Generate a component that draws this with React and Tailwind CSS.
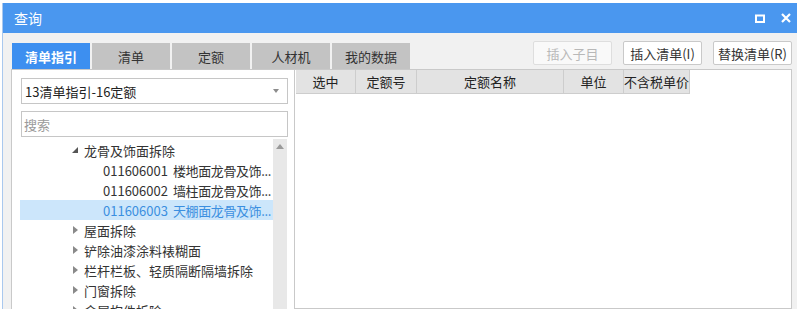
import React from 'react'

const TABS = ['清单指引', '清单', '定额', '人材机', '我的数据']

const COLUMNS = [
  { label: '选中', w: 'w-[60px]' },
  { label: '定额号', w: 'w-[61px]' },
  { label: '定额名称', w: 'w-[147px]' },
  { label: '单位', w: 'w-[60px]' },
  { label: '不含税单价', w: 'w-[66px]' },
]

const TREE = [
  { type: 'open', text: '龙骨及饰面拆除' },
  { type: 'leaf', code: '011606001', text: '楼地面龙骨及饰...' },
  { type: 'leaf', code: '011606002', text: '墙柱面龙骨及饰...' },
  { type: 'leaf', code: '011606003', text: '天棚面龙骨及饰...', selected: true },
  { type: 'closed', text: '屋面拆除' },
  { type: 'closed', text: '铲除油漆涂料裱糊面' },
  { type: 'closed', text: '栏杆栏板、轻质隔断隔墙拆除' },
  { type: 'closed', text: '门窗拆除' },
  { type: 'closed', text: '金属构件拆除' },
]

function TreeRow({ row }) {
  if (row.type === 'leaf') {
    return (
      <div className={`h-5 shrink-0 flex items-center whitespace-nowrap pl-[83px] ${row.selected ? 'bg-[#cce6fb] text-[#3b8fe0]' : 'text-[#333]'}`}>
        <span className="w-[70px] shrink-0">{row.code}</span>
        <span className="tracking-[-0.4px]">{row.text}</span>
      </div>
    )
  }
  return (
    <div className="h-5 shrink-0 flex items-center whitespace-nowrap text-[#333]">
      <span className="w-[64px] shrink-0 flex justify-end pr-[6px]">
        {row.type === 'open' ? (
          <svg width="6" height="6" viewBox="0 0 6 6"><path d="M6 0 L6 6 L0 6 Z" fill="#555" /></svg>
        ) : (
          <svg width="5" height="8" viewBox="0 0 5 8"><path d="M0 0 L5 4 L0 8 Z" fill="#8a8a8a" /></svg>
        )}
      </span>
      <span>{row.text}</span>
    </div>
  )
}

export default function App() {
  return (
    <div className="w-[800px] h-[309px] overflow-hidden bg-white pt-[3px] pl-[2px] font-['Noto_Sans_CJK_SC','Noto_Sans',sans-serif] text-[13px] leading-none">
      <div className="w-[795px] h-[306px] flex flex-col border-l border-[#a9c8ee]">
        {/* title bar */}
        <div className="h-[30px] shrink-0 bg-[#4a97ef] flex items-center pl-[11px] pr-[6px] text-white">
          <span className="text-[14px]">查询</span>
          <div className="ml-auto flex items-center gap-[16px]">
            <svg width="10" height="9" viewBox="0 0 10 9"><rect x="1" y="1.5" width="8" height="6.5" fill="none" stroke="#fff" strokeWidth="2" /></svg>
            <svg width="10" height="10" viewBox="0 0 10 10"><path d="M1 1 L9 9 M9 1 L1 9" stroke="#fff" strokeWidth="2.2" /></svg>
          </div>
        </div>

        {/* body */}
        <div className="flex-1 bg-[#f1f1f1] pl-[8px] pr-[5px] flex flex-col min-h-0">
          <div className="flex items-end h-[36px] shrink-0">
            <div className="flex gap-[2px] pl-[1px]">
              {TABS.map((t, i) => (
                <div
                  key={t}
                  className={`w-[78px] h-[26px] flex items-center justify-center ${i === 0 ? 'bg-[#3d8ff0] text-white font-bold' : 'bg-[#c3c3c3] text-[#333]'}`}
                >
                  {t}
                </div>
              ))}
            </div>
            <div className="ml-auto flex gap-[11px] mb-[4px]">
              <div className="w-[79px] h-[24px] flex items-center justify-center border border-[#dedede] bg-[#f9f9f9] text-[#b8b8b8] rounded-[2px]">插入子目</div>
              <div className="w-[79px] h-[24px] flex items-center justify-center border border-[#c9c9c9] bg-white text-[#333] rounded-[2px]">插入清单(I)</div>
              <div className="w-[79px] h-[24px] flex items-center justify-center border border-[#c9c9c9] bg-white text-[#333] rounded-[2px]">替换清单(R)</div>
            </div>
          </div>

          <div className="flex flex-1 min-h-0">
            {/* left panel */}
            <div className="w-[283px] min-h-0 overflow-hidden bg-white border-l border-t border-[#c9c9c9] pl-[9px] pt-[8px] flex flex-col">
              <div className="shrink-0 w-[267px] h-[26px] border border-[#c6c6c6] flex items-center pl-[3px] pr-[8px] text-[#222]">
                <span>13清单指引-16定额</span>
                <svg className="ml-auto" width="6" height="4" viewBox="0 0 6 4"><path d="M0 0 L6 0 L3 4 Z" fill="#8c8c8c" /></svg>
              </div>
              <div className="shrink-0 w-[267px] h-[26px] border border-[#c6c6c6] flex items-center pl-[2px] mt-[7px] text-[#9a9a9a]">
                搜索
              </div>
              <div className="flex mt-[2px] flex-1 min-h-0">
                <div className="w-[253px] -ml-[1px] pt-[1px] flex flex-col">
                  {TREE.map((r, i) => <TreeRow key={i} row={r} />)}
                </div>
                <div className="w-[14px] bg-[#e8e8e8] flex justify-center pt-[5px]">
                  <svg width="8" height="5" viewBox="0 0 8 5"><path d="M0 5 L4 0 L8 5 Z" fill="#9a9a9a" /></svg>
                </div>
              </div>
            </div>

            {/* right panel */}
            <div className="flex-1 bg-white border border-[#c9c9c9] pl-[1px]">
              <div className="flex h-[24px] w-max bg-[#e3e3e3] border-b border-[#cdcdcd]">
                {COLUMNS.map(c => (
                  <div key={c.label} className={`${c.w} flex items-center justify-center border-r border-[#cdcdcd] text-[#222]`}>
                    {c.label}
                  </div>
                ))}
              </div>
            </div>
          </div>
        </div>
      </div>
    </div>
  )
}
